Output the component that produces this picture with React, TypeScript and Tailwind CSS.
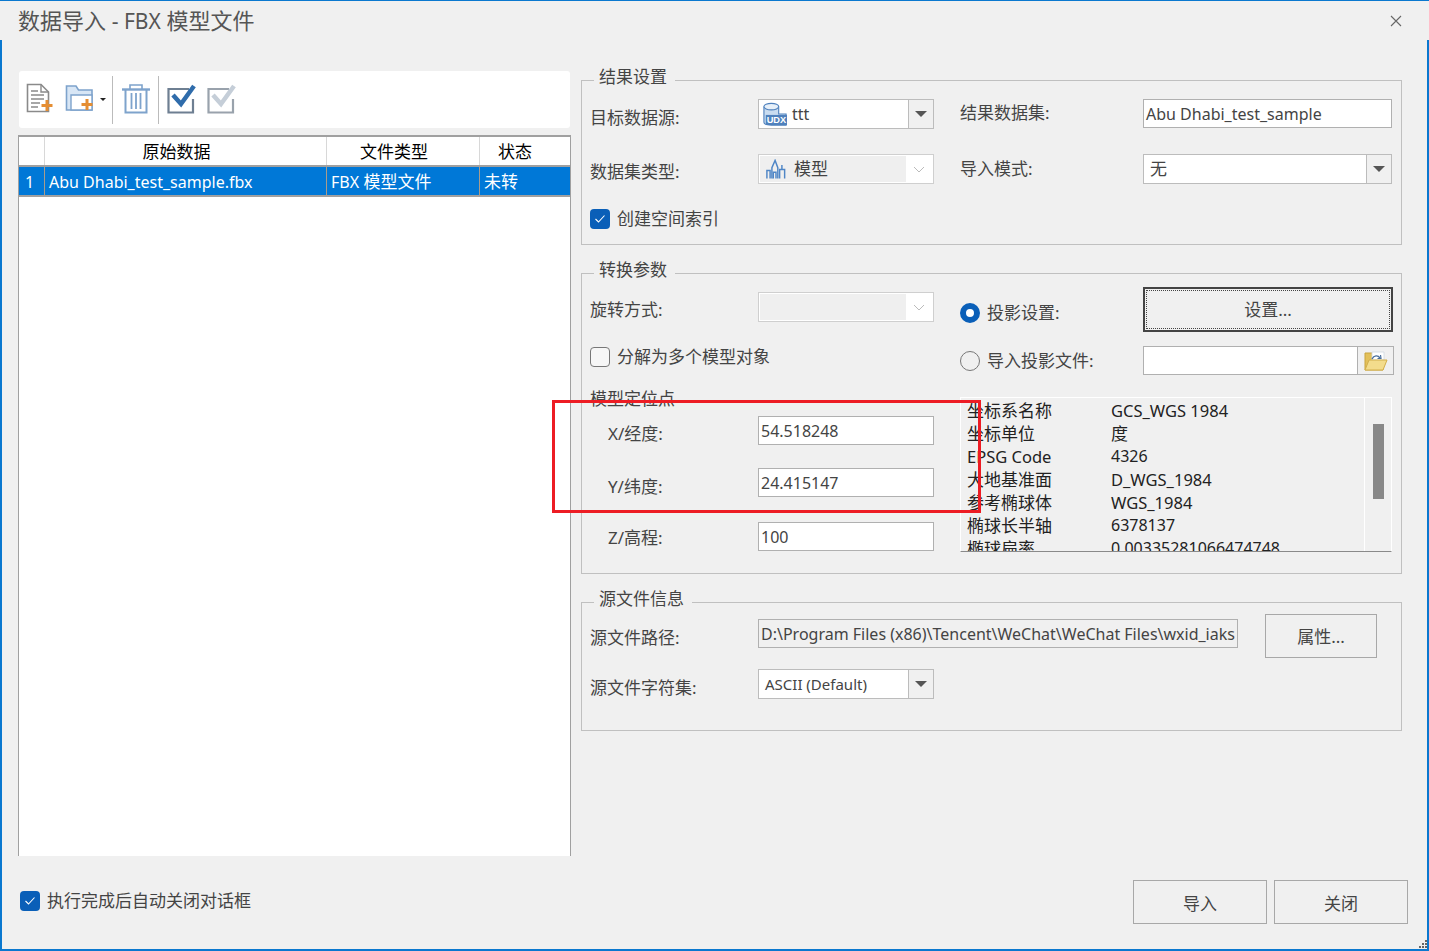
import type { ReactNode } from "react";

const FONT = "font-['Noto_Sans','Noto_Sans_CJK_SC',sans-serif]";

function NewDocIcon() {
  return (
    <svg width="28" height="31" viewBox="0 0 28 31" fill="none">
      <path d="M1.5 1.5H15L22.5 9V28.5H1.5Z" fill="#fff" stroke="#8a8a8a" strokeWidth="1.6" />
      <path d="M15 1.5V9H22.5" stroke="#8a8a8a" strokeWidth="1.4" />
      <path d="M5 8H12M5 12H18M5 16H18M5 20H14M5 24H12" stroke="#8a8a8a" strokeWidth="1.3" />
      <path d="M21 17V28M15.5 22.5H26.5" stroke="#e58e33" strokeWidth="3" />
    </svg>
  );
}

function AddFolderIcon() {
  return (
    <svg width="30" height="28" viewBox="0 0 30 28" fill="none">
      <path d="M1.5 2H11L13.5 6H27V26H1.5Z" fill="#d8e6f5" stroke="#7ea3cc" strokeWidth="1.6" />
      <path d="M6 11H27V26H6Z" fill="#fff" stroke="#7ea3cc" strokeWidth="1.4" />
      <path d="M22 15V26M16.5 20.5H27.5" stroke="#e58e33" strokeWidth="3" />
    </svg>
  );
}

function TrashIcon() {
  return (
    <svg width="30" height="31" viewBox="0 0 30 31" fill="none" stroke="#7ea3cc">
      <path d="M1 6.5H29" strokeWidth="2.4" />
      <path d="M9 6V2H21V6" strokeWidth="1.6" />
      <path d="M4.5 7V29.5H25.5V7" strokeWidth="2" />
      <path d="M10.5 10V26M15 10V26M19.5 10V26" strokeWidth="1.8" />
    </svg>
  );
}

function CheckIcon({ box, tick }: { box: string; tick: string }) {
  return (
    <svg width="31" height="31" viewBox="0 0 31 31" fill="none">
      <path d="M22 6H1.5V29.5H26V16" stroke={box} strokeWidth="2.2" />
      <path d="M6 12L14 21L27 3" stroke={tick} strokeWidth="4.5" />
    </svg>
  );
}

function DbIcon() {
  return (
    <svg width="24" height="24" viewBox="0 0 26 26" fill="none">
      <path d="M1 5V22C1 24 5 25 9 25H25V13H17V5" fill="#c9dcf0" stroke="#4f81bd" strokeWidth="1.2" />
      <ellipse cx="9" cy="5" rx="8" ry="3.5" fill="#e7f0f9" stroke="#4f81bd" strokeWidth="1.2" />
      <rect x="3" y="14" width="23" height="11" fill="#4f81bd" />
      <text x="14.5" y="23" textAnchor="middle" fontSize="10" fontWeight="700" fill="#fff" fontFamily="Liberation Sans, sans-serif">
        UDX
      </text>
    </svg>
  );
}

function ModelIcon() {
  return (
    <svg width="20" height="21" viewBox="0 0 22 22" fill="none" stroke="#4f86c6" strokeWidth="1.6">
      <path d="M1 21V12H4.5V21" />
      <path d="M6.5 21V9L10 1L13 9V21" />
      <path d="M8 21V14H11V21" />
      <path d="M15 21V11H20.5V21" />
      <path d="M17.5 11V6" />
    </svg>
  );
}

function OpenFolderIcon() {
  return (
    <svg width="24" height="22" viewBox="0 0 24 22" fill="none">
      <path d="M1 3H8L10 5H19V20H1Z" fill="#e3c05a" stroke="#c9a33d" />
      <path d="M8 2H20V10H8Z" fill="#fff" stroke="#cfd8e0" strokeWidth="0.8" />
      <path d="M5 10H23L19 20H1Z" fill="#f3dc8c" stroke="#d2ae4a" />
      <path d="M8 9C10 5 14 5 16 8" stroke="#4a6f9c" strokeWidth="1.4" />
      <path d="M13.5 8.5L17 8.5L16.5 5" stroke="#4a6f9c" strokeWidth="1.2" />
    </svg>
  );
}

function Check({ checked = false }: { checked?: boolean }) {
  return (
    <span
      className={
        checked
          ? "flex h-[20px] w-[20px] shrink-0 items-center justify-center rounded-[4px] bg-[#0a5fb8]"
          : "flex h-[20px] w-[20px] shrink-0 rounded-[4px] border border-[#777] bg-[#f6f6f6]"
      }
    >
      {checked && (
        <svg width="12" height="10" viewBox="0 0 12 10" fill="none" stroke="#fff" strokeWidth="1.1">
          <path d="M1.5 5L4.5 8L10.5 1.5" />
        </svg>
      )}
    </span>
  );
}

function Radio({ checked = false }: { checked?: boolean }) {
  return checked ? (
    <span className="h-[20px] w-[20px] shrink-0 rounded-full border-[6px] border-[#0a5fb8] bg-white" />
  ) : (
    <span className="h-[20px] w-[20px] shrink-0 rounded-full border border-[#777]" />
  );
}

function Label({ children, className = "" }: { children: ReactNode; className?: string }) {
  return <span className={`text-[17px] leading-[24px] whitespace-nowrap text-[#444] ${className}`}>{children}</span>;
}

function Input({ value, className = "" }: { value?: string; className?: string }) {
  return (
    <div
      className={`flex h-[29px] items-center overflow-hidden border border-[#b0b0b0] pl-[2px] text-[16px] whitespace-nowrap text-[#444] ${className || "bg-white"}`}
    >
      {value}
    </div>
  );
}

function Combo({ children, className = "" }: { children: ReactNode; className?: string }) {
  return (
    <div className={`flex h-[30px] border border-[#bcbcbc] bg-white ${className}`}>
      <div className="flex flex-1 items-center overflow-hidden text-[17px] text-[#444]">{children}</div>
      <div className="flex w-[25px] items-center justify-center border-l border-[#bcbcbc] bg-[#f0f0f0]">
        <span className="h-0 w-0 border-x-[6px] border-t-[6px] border-x-transparent border-t-[#555]" />
      </div>
    </div>
  );
}

function DisabledCombo({ children }: { children?: ReactNode }) {
  return (
    <div className="flex h-[30px] w-[176px] border border-[#cfcfcf] bg-white p-[1px]">
      <div className="flex flex-1 items-center bg-[#efefef] text-[17px] text-[#444]">{children}</div>
      <div className="flex w-[26px] items-center justify-center">
        <svg width="12" height="7" viewBox="0 0 12 7" fill="none" stroke="#bbb">
          <path d="M1 1L6 6L11 1" />
        </svg>
      </div>
    </div>
  );
}

function Group({ title, className = "", children }: { title: string; className?: string; children: ReactNode }) {
  return (
    <fieldset className={`border border-[#c0c0c0] pl-[8px] ${className}`}>
      <legend className="ml-[4px] h-[24px] px-[5px] text-[17px] leading-[18px] text-[#444]">
        {title}
        <span className="inline-block w-[3px]" />
      </legend>
      {children}
    </fieldset>
  );
}

const infoRows = [
  ["坐标系名称", "GCS_WGS 1984"],
  ["坐标单位", "度"],
  ["EPSG Code", "4326"],
  ["大地基准面", "D_WGS_1984"],
  ["参考椭球体", "WGS_1984"],
  ["椭球长半轴", "6378137"],
  ["椭球扁率", "0.00335281066474748"],
];

const infoSize = (text: string) => {
  if (/^[0-9.]+$/.test(text)) return "text-[16px]";
  return /^[\x00-\x7f]+$/.test(text) ? "text-[16.5px]" : "text-[17px]";
};

export default function App() {
  return (
    <div className={`relative flex h-[951px] w-[1429px] flex-col overflow-hidden border-t border-b-2 border-[#0a78cf] bg-[#f0f0f0] ${FONT}`}>
      <div className="flex h-[39px] shrink-0 items-center justify-between bg-[#f0f0f0] pr-[26px] pl-[18px] text-[22px] text-[#555]">
        <span>
          数据导入 <span className="text-[21px]">- FBX</span> 模型文件
        </span>
        <svg width="14" height="14" viewBox="0 0 14 14" stroke="#666" strokeWidth="1.1">
          <path d="M2 2L12 12M12 2L2 12" />
        </svg>
      </div>

      <div className="flex flex-1 border-x-2 border-[#0a78cf]">
        <div className="flex w-[577px] shrink-0 flex-col pt-[31px] pl-[16px]">
          {/* toolbar */}
          <div className="ml-[1px] flex h-[57px] w-[551px] items-center rounded-[3px] bg-white">
            <span className="mb-[3px] ml-[7px] flex"><NewDocIcon /></span>
            <span className="mb-[3px] ml-[11px] flex"><AddFolderIcon /></span>
            <span className="ml-[5px] h-0 w-0 border-x-[3px] border-t-[3px] border-x-transparent border-t-[#222]" />
            <span className="ml-[6px] h-[48px] w-px bg-[#bbb]" />
            <span className="mb-[3px] ml-[8px] flex"><TrashIcon /></span>
            <span className="ml-[7px] h-[48px] w-px bg-[#bbb]" />
            <span className="mb-[3px] ml-[8px] flex"><CheckIcon box="#6e7f92" tick="#2f6cab" /></span>
            <span className="mb-[3px] ml-[9px] flex"><CheckIcon box="#99a2ac" tick="#c5ced8" /></span>
          </div>

          {/* table */}
          <div className="mt-[7px] h-[721px] w-[553px] border-x border-t-2 border-[#a0a0a0] bg-white text-[17px]">
            <div className="flex h-[30px] border-b-2 border-[#a0a0a0] leading-[30px] text-black">
              <div className="w-[26px] border-r border-[#d8d8d8]" />
              <div className="w-[282px] border-r border-[#d8d8d8] pr-[18px] text-center">原始数据</div>
              <div className="w-[153px] border-r border-[#d8d8d8] pr-[18px] text-center">文件类型</div>
              <div className="w-[90px] pr-[20px] text-center">状态</div>
            </div>
            <div className="flex h-[30px] border-b-2 border-[#a0a0a0] bg-[#0078d7] leading-[30px] whitespace-nowrap text-white">
              <div className="w-[26px] border-r border-[#a89c8c] pl-[6px] text-[16px]">1</div>
              <div className="w-[282px] border-r border-[#a89c8c] pl-[4px] text-[16px]">Abu Dhabi_test_sample.fbx</div>
              <div className="w-[153px] border-r border-[#a89c8c] pl-[4px]">
                <span className="text-[16px]">FBX</span> 模型文件
              </div>
              <div className="w-[90px] pl-[4px]">未转</div>
            </div>
          </div>

          <div className="mt-[33px] flex items-center gap-[7px] pl-[2px]">
            <Check checked />
            <Label>执行完成后自动关闭对话框</Label>
          </div>
        </div>

        <div className="relative flex-1 pt-[28px] pl-[2px]">
          {/* 结果设置 */}
          <Group title="结果设置" className="h-[177px] w-[821px]">
            <div className="grid grid-cols-[168px_176px_26px_183px_249px] pt-[7px]">
              <Label className="pt-[7px]">目标数据源:</Label>
              <Combo className="w-[176px]">
                <span className="ml-[4px] flex"><DbIcon /></span>
                <span className="ml-[5px] text-[16px]">ttt</span>
              </Combo>
              <span />
              <Label className="pt-[2px]">结果数据集:</Label>
              <Input value="Abu Dhabi_test_sample" />
            </div>
            <div className="mt-[24px] grid grid-cols-[168px_176px_26px_183px_249px]">
              <Label className="pt-[6px]">数据集类型:</Label>
              <DisabledCombo>
                <span className="ml-[6px] flex"><ModelIcon /></span>
                <span className="ml-[8px]">模型</span>
              </DisabledCombo>
              <span />
              <Label className="pt-[3px]">导入模式:</Label>
              <Combo className="w-[249px]">
                <span className="pl-[6px]">无</span>
              </Combo>
            </div>
            <div className="mt-[23px] flex items-center gap-[7px]">
              <Check checked />
              <Label>创建空间索引</Label>
            </div>
          </Group>

          {/* 转换参数 */}
          <Group title="转换参数" className="mt-[16px] h-[313px] w-[821px]">
            <div className="grid grid-cols-[168px_176px_26px_183px_250px] items-start">
              <Label className="pt-[13px]">旋转方式:</Label>
              <div className="pt-[7px]"><DisabledCombo /></div>
              <span />
              <div className="flex items-center gap-[7px] pt-[16px]">
                <Radio checked />
                <Label>投影设置:</Label>
              </div>
              <div className="mt-[2px] flex h-[45px] items-center justify-center border-2 border-[#444] text-[17px] text-[#444] outline-1 -outline-offset-4 outline-[#444] outline-dotted">
                设置...
              </div>
            </div>
            <div className="mt-[14px] grid grid-cols-[370px_183px_251px] items-start">
              <div className="-mt-[1px] flex items-center gap-[7px]">
                <Check />
                <Label>分解为多个模型对象</Label>
              </div>
              <div className="flex items-center gap-[7px] pt-[3px]">
                <Radio />
                <Label>导入投影文件:</Label>
              </div>
              <div className="flex h-[29px]">
                <Input className="flex-1 bg-white" />
                <div className="flex w-[36px] items-center justify-center border border-l-0 border-[#b0b0b0] bg-[#f0f0f0]">
                  <OpenFolderIcon />
                </div>
              </div>
            </div>

            <div className="mt-[22px] flex">
              <div className="w-[370px]">
                <Label className="-mt-[10px] block">模型定位点</Label>
                <div className="mt-[5px] flex items-start pl-[18px]">
                  <Label className="w-[150px] pt-[6px]">X/经度:</Label>
                  <Input value="54.518248" className="w-[176px] bg-white" />
                </div>
                <div className="mt-[22px] flex items-start pl-[18px]">
                  <Label className="w-[150px] pt-[7px]">Y/纬度:</Label>
                  <Input value="24.415147" className="w-[176px] bg-white" />
                </div>
                <div className="mt-[23px] flex items-start pl-[18px]">
                  <Label className="w-[150px] pt-[4px]">Z/高程:</Label>
                  <Input value="100" className="w-[176px] bg-white" />
                </div>
              </div>
              <div className="flex h-[155px] w-[432px] overflow-hidden border border-t-white border-r-white border-b-[#8a8a8a] border-l-white">
                <div className="w-[403px] shrink-0 pt-[1px] pl-[6px] leading-[23px] whitespace-nowrap text-[#222]">
                  {infoRows.map(([name, value]) => (
                    <div key={name} className="flex h-[23px]">
                      <span className={`w-[144px] shrink-0 ${infoSize(name)}`}>{name}</span>
                      <span className={infoSize(value)}>{value}</span>
                    </div>
                  ))}
                </div>
                <div className="flex flex-1 justify-center border-l border-white pt-[26px]">
                  <div className="h-[75px] w-[11px] bg-[#888]" />
                </div>
              </div>
            </div>
          </Group>

          {/* 源文件信息 */}
          <Group title="源文件信息" className="mt-[16px] h-[141px] w-[821px]">
            <div className="flex items-start pt-[5px]">
              <Label className="w-[168px] pt-[7px]">源文件路径:</Label>
              <Input value="D:\Program Files (x86)\Tencent\WeChat\WeChat Files\wxid_iaks" className="w-[480px] bg-[#f0f0f0]" />
              <div className="ml-[27px] flex h-[44px] w-[112px] -translate-y-[5px] items-center justify-center border border-[#a8a8a8] pt-[2px] text-[17px] text-[#444]">
                属性...
              </div>
            </div>
            <div className="mt-[6px] flex items-start">
              <Label className="w-[168px] pt-[7px]">源文件字符集:</Label>
              <Combo className="w-[176px]">
                <span className="pl-[6px] text-[15px]">ASCII (Default)</span>
              </Combo>
            </div>
          </Group>

          <div className="absolute right-[19px] bottom-[25px] flex gap-[7px]">
            <div className="flex h-[44px] w-[134px] items-center justify-center border border-[#a8a8a8] pt-[3px] text-[17px] text-[#444]">导入</div>
            <div className="flex h-[44px] w-[134px] items-center justify-center border border-[#a8a8a8] pt-[3px] text-[17px] text-[#444]">关闭</div>
          </div>
        </div>
      </div>

      {/* annotation drawn on the screenshot */}
      <div className="absolute top-[399px] left-[552px] h-[113px] w-[429px] border-[3px] border-[#ed1c24]" />

      {/* resize grip */}
      <svg className="absolute right-[1px] bottom-0" width="9" height="9" viewBox="0 0 9 9" fill="#666">
        <path d="M6 0H8V2H6ZM3 3H5V5H3ZM6 3H8V5H6ZM0 6H2V8H0ZM3 6H5V8H3ZM6 6H8V8H6Z" />
      </svg>
    </div>
  );
}
